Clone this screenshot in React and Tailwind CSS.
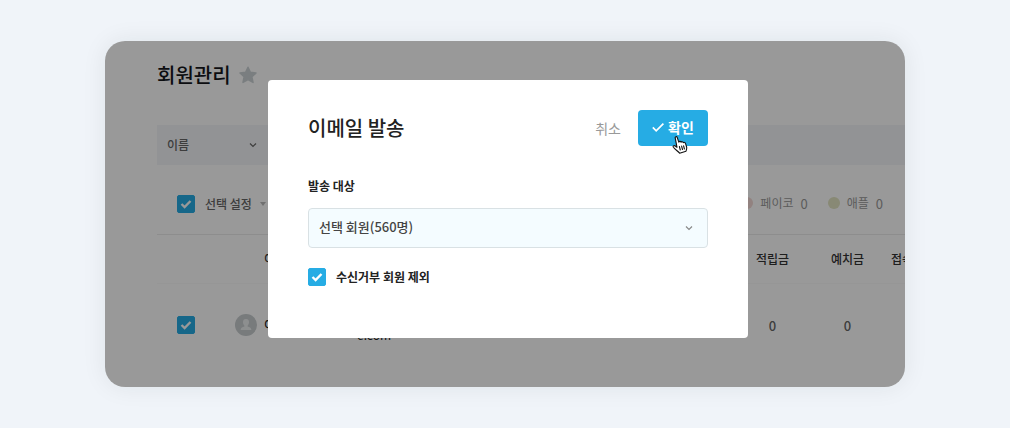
import React, { useState } from 'react';

const payments = [
  { name: '네이버', count: 0, dot: 'bg-[#e2f2e6]' },
  { name: '카카오', count: 0, dot: 'bg-[#f5f0d6]' },
  { name: '페이코', count: 0, dot: 'bg-[#f3d9d5]' },
  { name: '애플', count: 0, dot: 'bg-[#e3e5c3]' },
];

function Chevron({ className }) {
  return (
    <svg className={className} viewBox="0 0 8 8" fill="none" stroke="currentColor" strokeWidth="1.2">
      <path d="M1 2.5 L4 5.5 L7 2.5" />
    </svg>
  );
}

function CheckBox({ id, label, checked, onChange }) {
  return (
    <span className="grid h-[18px] w-[18px] shrink-0 place-items-center">
      <input
        id={id}
        type="checkbox"
        aria-label={label}
        checked={checked}
        onChange={onChange}
        className="col-start-1 row-start-1 h-[18px] w-[18px] appearance-none rounded-xs border border-gray-300 checked:border-[#26ace4] checked:bg-[#26ace4]"
      />
      {checked && (
        <svg className="pointer-events-none col-start-1 row-start-1 h-3 w-3" viewBox="0 0 12 12" fill="none" stroke="#fff" strokeWidth="2.4">
          <path d="M1.5 6 L4.6 9 L10.5 3" />
        </svg>
      )}
    </span>
  );
}

function MemberPage() {
  const [all, setAll] = useState(true);
  const [row, setRow] = useState(true);

  return (
    <div className="pl-[52px] pt-5 pb-5 text-xs text-[#666]">
      <div className="flex h-7 items-center gap-2">
        <h1 className="text-xl font-medium text-[#15171c]">회원관리</h1>
        <svg className="h-[18px] w-[18px]" viewBox="0 0 18 18" fill="#ccd3d6" stroke="#ccd3d6" strokeWidth="1.5" strokeLinejoin="round">
          <path d="M9 1.2 L11.4 6.3 L17 7 L12.9 10.8 L14 16.4 L9 13.6 L4 16.4 L5.1 10.8 L1 7 L6.6 6.3 Z" />
        </svg>
      </div>

      <div className="mt-9 flex h-10 items-center bg-[#f4f6f9]">
        <div className="grid w-[110px] items-center">
          <select aria-label="검색 조건" className="col-start-1 row-start-1 h-10 appearance-none px-2.5 font-medium">
            <option>이름</option>
            <option>이메일</option>
          </select>
          <Chevron className="pointer-events-none col-start-1 row-start-1 mr-2.5 h-2 w-2 justify-self-end" />
        </div>
      </div>

      <div className="flex h-[70px] items-center justify-between border-b border-[#ebebeb] pt-2 pl-5 pr-[22px]">
        <div className="flex items-center">
          <CheckBox label="전체 선택" checked={all} onChange={() => setAll(!all)} />
          <button type="button" className="ml-2.5 flex items-center gap-2 font-medium">
            선택 설정
            <svg className="h-1 w-1.5" viewBox="0 0 6 4" fill="#bbb"><path d="M0 0 H6 L3 4 Z" /></svg>
          </button>
        </div>
        <ul className="flex items-center gap-5 text-[#999]">
          {payments.map((p) => (
            <li key={p.name} className="flex items-center gap-[7px]">
              <span className={`h-3 w-3 rounded-full ${p.dot}`} />
              {p.name}
              <span className="text-[13px]">{p.count}</span>
            </li>
          ))}
        </ul>
      </div>

      <div className="overflow-hidden">
        <table className="w-[820px] table-fixed whitespace-nowrap">
          <colgroup>
            <col className="w-[78px]" />
            <col className="w-[29px]" />
            <col className="w-[83px]" />
            <col />
            <col className="w-[75px]" />
            <col className="w-[75px]" />
            <col className="w-[92px]" />
          </colgroup>
          <thead>
            <tr className="h-12 border-b border-[#fafafa] text-[#333]">
              <th></th>
              <th></th>
              <th className="text-left font-medium">이름</th>
              <th className="pl-2.5 text-left font-medium">이메일</th>
              <th className="font-medium">적립금</th>
              <th className="font-medium">예치금</th>
              <th className="pl-1.5 text-left font-medium">접속일</th>
            </tr>
          </thead>
          <tbody>
            <tr className="h-[84px]">
              <td className="pl-5">
                <CheckBox label="이정민 선택" checked={row} onChange={() => setRow(!row)} />
              </td>
              <td>
                <svg className="h-[22px] w-[22px]" viewBox="0 0 22 22">
                  <circle cx="11" cy="11" r="11" fill="#c8cdcf" />
                  <path d="M11 5 C8.6 5 7.8 6.8 8 8.6 C8.1 10 8.7 11 9.4 11.8 L9.4 12.6 C7.5 13.2 5.8 13.8 5.6 16 H16.4 C16.2 13.8 14.5 13.2 12.6 12.6 L12.6 11.8 C13.3 11 13.9 10 14 8.6 C14.2 6.8 13.4 5 11 5 Z" fill="#eceeef" />
                </svg>
              </td>
              <td className="font-medium text-[#222]">이정민</td>
              <td className="pl-2.5 pb-3 leading-4 text-[#222]">jmlee<br />@mail<br />e.com</td>
              <td className="text-center text-[13px] font-medium">0</td>
              <td className="text-center text-[13px] font-medium">0</td>
              <td></td>
            </tr>
          </tbody>
        </table>
      </div>
    </div>
  );
}

function EmailModal() {
  const [exclude, setExclude] = useState(true);

  return (
    <div role="dialog" aria-labelledby="modal-title" className="w-[480px] rounded bg-white px-10 pb-[52px] pt-[30px] text-[#222]">
      <div className="flex items-center justify-between">
        <h2 id="modal-title" className="text-xl font-medium">이메일 발송</h2>
        <div className="flex items-center gap-[17px]">
          <button type="button" className="text-sm text-[#999]">취소</button>
          <button type="button" className="relative flex h-9 w-[70px] items-center justify-center gap-1 rounded bg-[#26ace4] pb-0.5 text-sm font-bold text-white">
            <svg className="h-3 w-3" viewBox="0 0 12 12" fill="none" stroke="currentColor" strokeWidth="1.7">
              <path d="M0.8 6.4 L4.2 9.8 L11.4 2.6" />
            </svg>
            확인
            <svg className="absolute left-[34px] top-[26px] h-[18px] w-4" viewBox="0 0 16 18" fill="#fff" stroke="#111" strokeWidth="1.1" strokeLinejoin="round" strokeLinecap="round">
              <path d="M3.2 1.8 C3 0.6 4.8 0.2 5.2 1.4 L6.8 6.2 C7 5.2 8.8 5.1 9 6.2 C9.4 5.4 11 5.5 11.3 6.6 C11.9 6 13.3 6.4 13.5 7.4 L14.6 11 C15 12.6 14.4 13.6 14 15.2 L7.6 17.2 C6 15.2 3 13.4 1.4 11.2 C0.6 10 1.8 9.2 2.9 9.8 L5 11.3 Z" />
              <path d="M7.4 10.5 L8.3 14 M9.6 10.1 L10.5 13.5 M11.6 9.8 L12.4 13" fill="none" />
            </svg>
          </button>
        </div>
      </div>

      <label htmlFor="target" className="mt-8 block text-xs leading-4 font-bold">발송 대상</label>
      <div className="mt-3.5 grid items-center">
        <select id="target" className="col-start-1 row-start-1 h-10 w-full appearance-none rounded border border-[#d9e1e4] bg-[#f4fcff] px-2.5 pb-0.5 text-[13px] font-medium text-[#444]">
          <option>선택 회원(560명)</option>
          <option>전체 회원</option>
        </select>
        <Chevron className="pointer-events-none col-start-1 row-start-1 mr-[15px] h-2 w-2 justify-self-end text-[#888]" />
      </div>

      <div className="mt-5 flex items-center gap-2.5">
        <CheckBox id="exclude" checked={exclude} onChange={() => setExclude(!exclude)} />
        <label htmlFor="exclude" className="text-xs font-bold">수신거부 회원 제외</label>
      </div>
    </div>
  );
}

export default function App() {
  return (
    <main className="min-h-screen bg-[#f0f4f9] px-[105px] py-[41px] font-['Noto_Sans_CJK_KR',sans-serif]">
      <div className="relative overflow-hidden rounded-[20px] bg-white shadow-[0_0_24px_rgba(0,40,40,0.08)]">
        <MemberPage />
        <div className="absolute inset-0 flex items-start justify-center bg-black/40 pl-1.5 pt-[39px]">
          <EmailModal />
        </div>
      </div>
    </main>
  );
}
